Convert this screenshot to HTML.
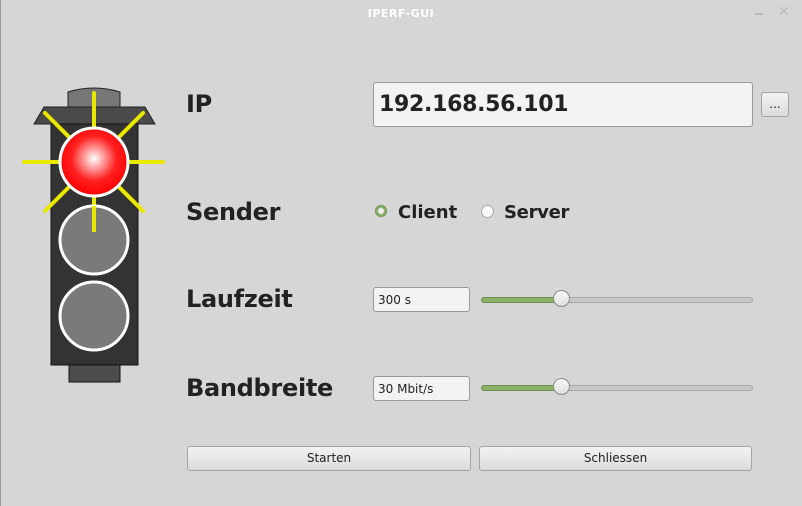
<!DOCTYPE html>
<html><head><meta charset="utf-8"><style>
body{margin:0;width:802px;height:506px;background:#d6d6d6;font-family:"DejaVu Sans","Liberation Sans",sans-serif;position:relative;overflow:hidden}
.a{position:absolute}
.lbl{font-weight:bold;font-size:24px;color:#222;letter-spacing:-0.3px}
.inp{background:#f3f3f3;border:1px solid #9a9a9a;border-radius:3px;box-sizing:border-box}
.btn{background:linear-gradient(#f2f2f2,#dcdcdc);border:1px solid #a4a4a4;border-radius:3px;box-sizing:border-box;font-size:12px;color:#222;text-align:center}
.trk{height:4px;background:#c8c8c8;border:1px solid #a8a8a8;border-radius:3px}
.fill{height:4px;background:#8bb36a;border:1px solid #6f8f55;border-radius:3px}
.knob{width:15px;height:15px;border-radius:50%;background:linear-gradient(#fafafa,#ddd);border:1px solid #8a8a8a}
</style></head><body>
<div class="a" style="left:0;top:0;width:1px;height:506px;background:#9a9a9a"></div>
<div class="a" style="left:0;top:7px;width:802px;text-align:center;font-size:11px;font-weight:bold;color:#fff;letter-spacing:.5px">IPERF-GUI</div>
<div class="a" style="left:755px;top:13px;width:8px;height:2px;background:#bdbdbd"></div>
<div class="a" style="left:778px;top:4px;font-size:14px;color:#bdbdbd;font-weight:bold">✕</div>
<svg class="a" style="left:0;top:0" width="180" height="400">
<path d="M68 107 V92 Q94 84 120 92 V107 Z" fill="#777" stroke="#222" stroke-width="1"/>
<path d="M34 124 L44 107 H145 L155 124 Z" fill="#4a4a4a" stroke="#222"/>
<rect x="51" y="124" width="87" height="241" fill="#333" stroke="#111"/>
<rect x="69" y="365" width="51" height="17" fill="#4d4d4d" stroke="#111"/>
<g stroke="#e8e800" stroke-width="4" stroke-linecap="round">
<line x1="94" y1="93" x2="94" y2="232"/><line x1="24" y1="162" x2="163" y2="162"/>
<line x1="45" y1="113" x2="143" y2="211"/><line x1="143" y1="113" x2="45" y2="211"/>
</g>
<defs><radialGradient id="r" cx=".5" cy=".45" r=".55"><stop offset="0" stop-color="#fff"/><stop offset=".6" stop-color="#ff2020"/><stop offset="1" stop-color="#f00"/></radialGradient></defs>
<circle cx="94" cy="240" r="34" fill="#7a7a7a" stroke="#fff" stroke-width="3"/>
<rect x="92" y="206" width="4" height="26" fill="#e8e800"/>
<circle cx="94" cy="162" r="34" fill="url(#r)" stroke="#fff" stroke-width="3"/>
<circle cx="94" cy="316" r="34" fill="#7a7a7a" stroke="#fff" stroke-width="3"/>
</svg>
<div class="a lbl" style="left:186px;top:90px">IP</div>
<div class="a lbl" style="left:186px;top:198px">Sender</div>
<div class="a lbl" style="left:186px;top:285px">Laufzeit</div>
<div class="a lbl" style="left:186px;top:374px">Bandbreite</div>
<div class="a inp" style="left:373px;top:82px;width:380px;height:45px;font-weight:bold;font-size:22px;letter-spacing:-0.3px;color:#222;padding:9px 0 0 5px">192.168.56.101</div>
<div class="a btn" style="left:761px;top:92px;width:28px;height:25px;line-height:22px">...</div>
<div class="a" style="left:375px;top:205px;width:12px;height:12px;border-radius:50%;background:#8bb36a;border:1px solid #6f8f55;box-sizing:border-box"><div style="margin:2px;width:6px;height:6px;border-radius:50%;background:#eee"></div></div>
<div class="a" style="left:398px;top:202px;font-size:18px;font-weight:bold;color:#222">Client</div>
<div class="a" style="left:481px;top:205px;width:13px;height:13px;border-radius:50%;background:#fafafa;border:1px solid #aaa;box-sizing:border-box"></div>
<div class="a" style="left:504px;top:202px;font-size:18px;font-weight:bold;color:#222;letter-spacing:-0.3px">Server</div>
<div class="a inp" style="left:373px;top:287px;width:97px;height:25px;font-size:12px;padding:5px 0 0 4px;color:#222">300 s</div>
<div class="a trk" style="left:481px;top:297px;width:270px"></div>
<div class="a fill" style="left:481px;top:297px;width:80px"></div>
<div class="a knob" style="left:553px;top:290px"></div>
<div class="a inp" style="left:373px;top:376px;width:97px;height:25px;font-size:12px;padding:5px 0 0 4px;color:#222">30 Mbit/s</div>
<div class="a trk" style="left:481px;top:385px;width:270px"></div>
<div class="a fill" style="left:481px;top:385px;width:80px"></div>
<div class="a knob" style="left:553px;top:378px"></div>
<div class="a btn" style="left:187px;top:446px;width:284px;height:25px;line-height:23px">Starten</div>
<div class="a btn" style="left:479px;top:446px;width:273px;height:25px;line-height:23px">Schliessen</div>
</body></html>
